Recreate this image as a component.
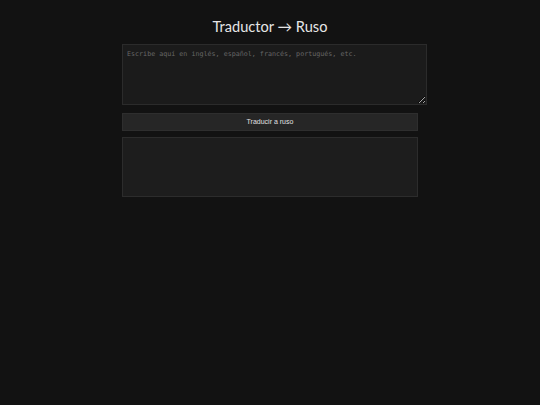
export default function App() {
  return (
    <div className="min-h-[405px] bg-[#121212] pt-[17px]">
      <div className="ml-[122px] w-[296px]">
        <h1 className="text-center font-['Lato',sans-serif] text-[14.6px] leading-[20px] text-[#e6e6e6]">
          Traductor → Ruso
        </h1>
        <textarea
          placeholder="Escribe aquí en inglés, español, francés, portugués, etc."
          className="mt-[7px] block h-[61px] w-[305px] resize-y border border-[#2b2b2b] bg-[#1b1b1b] px-[4px] py-[4px] font-['DejaVu_Sans_Mono',monospace] text-[6.7px] text-[#cccccc] placeholder:text-[#666666] outline-none"
        />
        <button className="mt-[8px] block h-[18px] w-full border border-[#2e2e2e] bg-[#262626] font-['Liberation_Sans',Arial,sans-serif] text-[7px] text-[#e0e0e0]">
          Traducir a ruso
        </button>
        <div className="mt-[6px] h-[60px] w-full border border-[#2c2c2c] bg-[#1d1d1d]" />
      </div>
    </div>
  );
}
